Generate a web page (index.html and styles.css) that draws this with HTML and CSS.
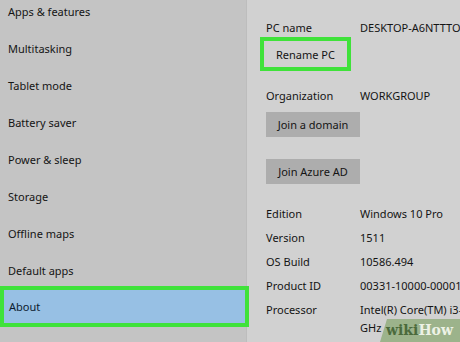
FILE: index.html
```html
<!DOCTYPE html>
<html lang="en">
<head>
  <meta charset="UTF-8" />
  <title>Settings - About</title>
  <link rel="stylesheet" href="styles.css">
</head>
<body>

  <div class="window">
    <aside class="sidebar">
      <ul class="nav">
        <li>Apps &amp; features</li>
        <li>Multitasking</li>
        <li>Tablet mode</li>
        <li>Battery saver</li>
        <li>Power &amp; sleep</li>
        <li>Storage</li>
        <li>Offline maps</li>
        <li>Default apps</li>
        <li class="active">About</li>
      </ul>
    </aside>

    <main class="content">
      <div class="row">
        <span class="label">PC name</span>
        <span class="value">DESKTOP-A6NTTTO</span>
      </div>
      <button class="btn btn-rename">Rename PC</button>

      <div class="row row-org">
        <span class="label">Organization</span>
        <span class="value">WORKGROUP</span>
      </div>
      <button class="btn btn-grey">Join a domain</button>
      <button class="btn btn-grey btn-azure">Join Azure AD</button>

      <div class="specs">
        <div class="row"><span class="label">Edition</span><span class="value">Windows 10 Pro</span></div>
        <div class="row"><span class="label">Version</span><span class="value">1511</span></div>
        <div class="row"><span class="label">OS Build</span><span class="value">10586.494</span></div>
        <div class="row"><span class="label">Product ID</span><span class="value">00331-10000-00001-AA123</span></div>
        <div class="row"><span class="label">Processor</span><span class="value">Intel(R) Core(TM) i3-4030U CPU @ 1.90<br>GHz</span></div>
      </div>
    </main>
  </div>

  <div class="badge"><span class="wiki">wiki</span><span class="how">How</span></div>

</body>
</html>
```

FILE: styles.css
```css
:root {
  --side-bg: #c4c4c4;
  --main-bg: #d1d1d1;
  --text: #141414;
  --green: #3fe23a;
  --select: #97c0e4;
  --btn: #adadad;
}

* {
  box-sizing: border-box;
}

html, body {
  margin: 0;
  padding: 0;
  height: 100%;
  overflow: hidden;
  font-family: 'Noto Sans', sans-serif;
  font-size: 11px;
  color: var(--text);
}

.window {
  display: flex;
  height: 342px;
  width: 460px;
}

.sidebar {
  width: 247px;
  flex-shrink: 0;
  background: var(--side-bg);
  border-right: 1px solid #bdbdbd;
}

.nav {
  list-style: none;
  margin: -7px 0 0;
  padding: 0;
}

.nav li {
  height: 37px;
  line-height: 37px;
  padding-left: 8px;
}

.nav li.active {
  position: relative;
  width: 249px;
  height: 41px;
  line-height: 33px;
  margin-top: -3px;
  padding-left: 5px;
  background: var(--select);
  border: 4px solid var(--green);
  color: #0c1c30;
}

.content {
  flex: 1;
  min-width: 0;
  overflow: hidden;
  background: var(--main-bg);
  padding: 19px 0 0 19px;
  display: flex;
  flex-direction: column;
  align-items: flex-start;
  white-space: nowrap;
}

.row {
  display: flex;
  line-height: 18px;
}

.label {
  width: 94px;
  flex-shrink: 0;
}

.btn {
  font-family: inherit;
  font-size: 11px;
  color: var(--text);
  border: none;
  cursor: pointer;
}

.btn-rename {
  margin: 0 0 0 -6px;
  width: 91px;
  height: 34px;
  background: var(--main-bg);
  border: 4px solid var(--green);
}

.row-org {
  margin-top: 16px;
}

.btn-grey {
  margin-top: 7px;
  width: 94px;
  height: 25px;
  background: var(--btn);
}

.btn-azure {
  margin-top: 22px;
}

.specs {
  margin-top: 21px;
  display: flex;
  flex-direction: column;
  gap: 6px;
}

.badge {
  position: absolute;
  right: 0;
  bottom: 0;
  width: 80px;
  height: 23px;
  background: #9cb38b;
  clip-path: polygon(7px 0, 100% 0, 100% 100%, 0 100%);
  font-family: 'DejaVu Serif', serif;
  font-weight: bold;
  font-size: 14px;
  line-height: 22px;
  padding-left: 6px;
  white-space: nowrap;
}

.wiki {
  color: #4b6a3c;
}

.how {
  color: #edf2e6;
}
```
